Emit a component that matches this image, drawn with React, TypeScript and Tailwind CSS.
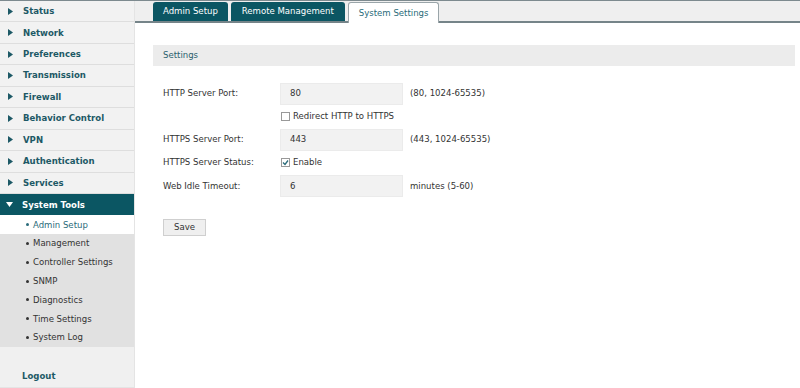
import React from "react";

const menu = [
  "Status",
  "Network",
  "Preferences",
  "Transmission",
  "Firewall",
  "Behavior Control",
  "VPN",
  "Authentication",
  "Services",
];

const subs = [
  "Admin Setup",
  "Management",
  "Controller Settings",
  "SNMP",
  "Diagnostics",
  "Time Settings",
  "System Log",
];

function Arrow({ down = false, color = "#1d5966" }: { down?: boolean; color?: string }) {
  return down ? (
    <svg width="7" height="5" viewBox="0 0 7 5" className="shrink-0">
      <polygon points="0,0 7,0 3.5,5" fill={color} />
    </svg>
  ) : (
    <svg width="5" height="7" viewBox="0 0 5 7" className="shrink-0">
      <polygon points="0,0 5,3.5 0,7" fill={color} />
    </svg>
  );
}

export default function App() {
  const font = { fontFamily: '"DejaVu Sans Condensed", "DejaVu Sans", Verdana, sans-serif' };
  return (
    <div className="w-[800px] h-[388px] flex bg-white overflow-hidden border-t border-[#7d8a8f]" style={font}>
      {/* Sidebar */}
      <div className="w-[135px] shrink-0 flex flex-col bg-[#f2f2f2] border-r border-[#e4e4e4]">
        {menu.map((m) => (
          <div
            key={m}
            className="h-[21.45px] shrink-0 flex items-center pl-[8px] gap-[10px] border-b border-[#dedede] text-[9.5px] font-bold text-[#1d5966]"
          >
            <Arrow />
            <span>{m}</span>
          </div>
        ))}
        <div className="h-[21.45px] shrink-0 flex items-center pl-[6px] gap-[9px] bg-[#0b5663] text-[9.5px] font-bold text-white">
          <Arrow down color="#ffffff" />
          <span>System Tools</span>
        </div>
        <div className="flex flex-col bg-[#e1e1e1]">
          {subs.map((s, i) => (
            <div
              key={s}
              className={`h-[18.8px] flex items-center pl-[26px] gap-[4px] text-[9.5px] ${
                i === 0 ? "bg-white text-[#2a6b7a]" : "text-[#333333]"
              }`}
            >
              <span className={`w-[3px] h-[3px] rounded-full ${i === 0 ? "bg-[#2a6b7a]" : "bg-[#333333]"}`} />
              <span>{s}</span>
            </div>
          ))}
        </div>
        <div className="flex-1 flex items-end pb-[4px] pl-[22px] bg-[#f0f0f0] border-b border-[#e4e4e4]">
          <span className="text-[9.5px] font-bold text-[#1d5966]">Logout</span>
        </div>
      </div>

      {/* Main */}
      <div className="flex-1 flex flex-col">
        <div className="h-[22px] shrink-0 bg-[#efefef] border-b-2 border-[#758489] flex items-end pl-[18px] gap-[3px]">
          <div className="h-[19px] px-[10px] flex items-center bg-[#0b5663] text-white text-[9.5px] rounded-t-[3px]">
            Admin Setup
          </div>
          <div className="h-[19px] px-[11px] flex items-center bg-[#0b5663] text-white text-[9.5px] rounded-t-[3px]">
            Remote Management
          </div>
          <div className="h-[21px] -mb-[2px] px-[10px] flex items-center bg-white text-[#2a6b7a] text-[9.5px] rounded-t-[3px] border border-b-0 border-[#9aa5a9]">
            System Settings
          </div>
        </div>

        <div className="pl-[18px] pr-[5px] pt-[22px]">
          <div className="h-[21px] bg-[#ececec] flex items-center pl-[10px] text-[9.5px] text-[#2a5f6e]">
            Settings
          </div>

          <div className="pl-[10px] pt-[16px] text-[9.5px] text-[#333333]">
            <div className="flex items-center h-[23px]">
              <span className="w-[117px]">HTTP Server Port:</span>
              <div className="w-[123px] h-[22px] bg-[#f2f2f2] border border-[#ebebeb] flex items-center pl-[9px]">80</div>
              <span className="ml-[7px]">(80, 1024-65535)</span>
            </div>
            <div className="flex items-center h-[23px] pl-[118px]">
              <span className="w-[9px] h-[9px] border border-[#999] bg-white mr-[3px]" />
              <span>Redirect HTTP to HTTPS</span>
            </div>
            <div className="flex items-center h-[23px]">
              <span className="w-[117px]">HTTPS Server Port:</span>
              <div className="w-[123px] h-[22px] bg-[#f2f2f2] border border-[#ebebeb] flex items-center pl-[9px]">443</div>
              <span className="ml-[7px]">(443, 1024-65535)</span>
            </div>
            <div className="flex items-center h-[23px]">
              <span className="w-[118px]">HTTPS Server Status:</span>
              <span className="w-[9px] h-[9px] border border-[#999] bg-white mr-[3px] flex items-center justify-center">
                <svg width="7" height="7" viewBox="0 0 7 7">
                  <polyline points="1,3.5 3,5.5 6,1.5" fill="none" stroke="#2a6b7a" strokeWidth="1.3" />
                </svg>
              </span>
              <span>Enable</span>
            </div>
            <div className="flex items-center h-[24px]">
              <span className="w-[117px]">Web Idle Timeout:</span>
              <div className="w-[123px] h-[22px] bg-[#f2f2f2] border border-[#ebebeb] flex items-center pl-[9px]">6</div>
              <span className="ml-[7px]">minutes (5-60)</span>
            </div>
            <div className="pt-[21px]">
              <div className="w-[43px] h-[17px] bg-[#efefef] border border-[#cfcfcf] flex items-center justify-center text-[9.5px] text-[#333]">
                Save
              </div>
            </div>
          </div>
        </div>
      </div>
    </div>
  );
}
